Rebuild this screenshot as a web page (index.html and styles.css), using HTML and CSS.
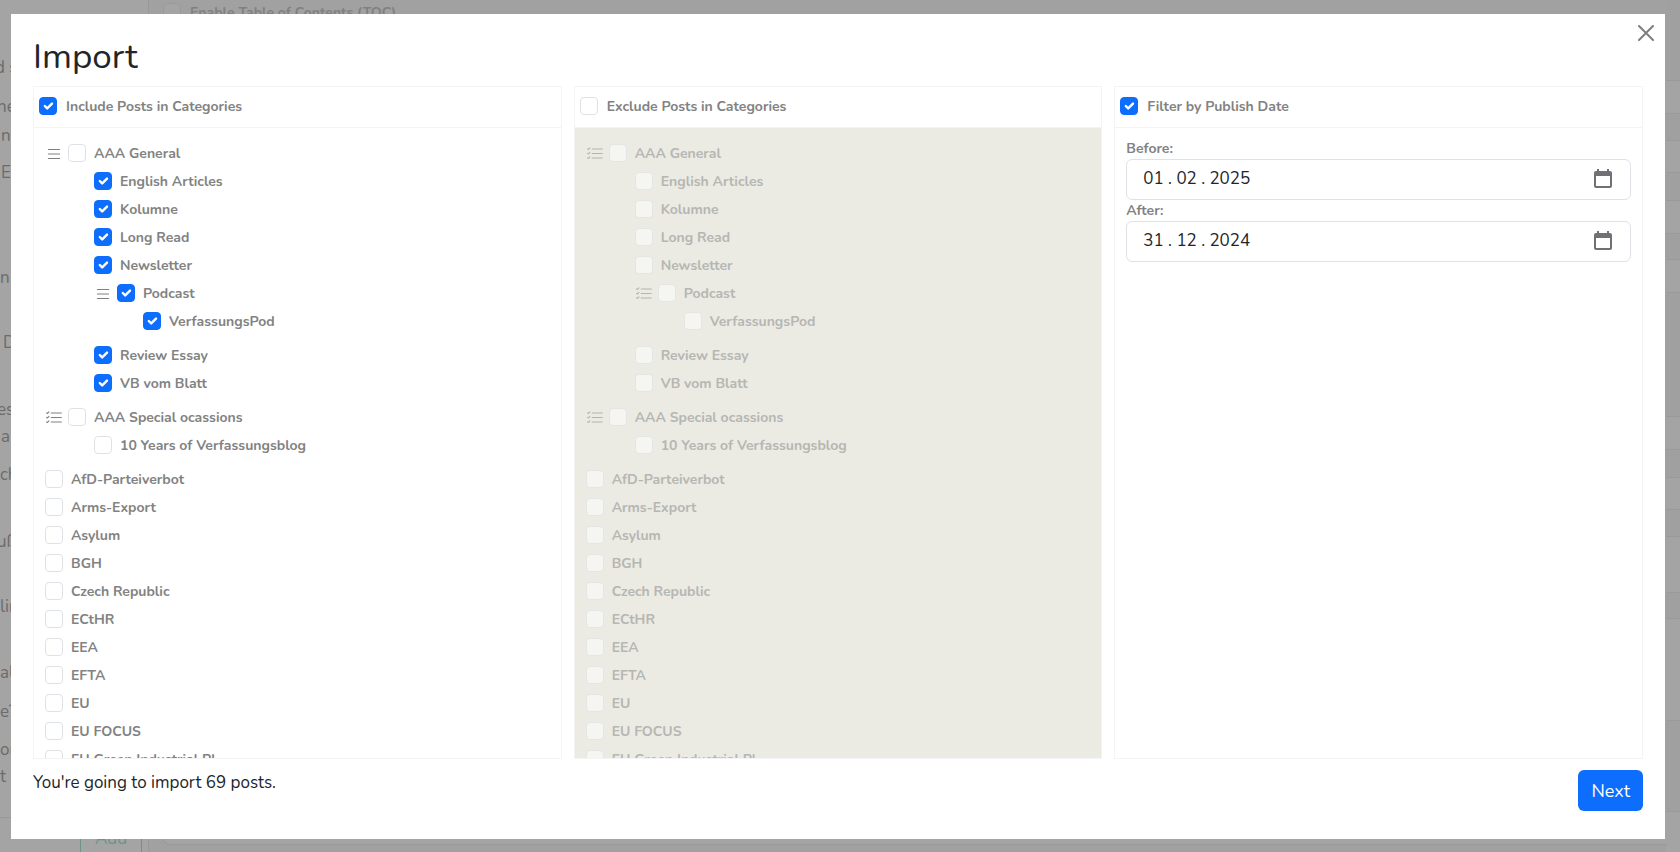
FILE: index.html
```
<!DOCTYPE html>
<html lang="en">
<head>
<meta charset="utf-8">
<title>Import</title>
<link rel="stylesheet" href="styles.css">
</head>
<body>
<svg width="0" height="0" class="sprite" aria-hidden="true">
  <symbol id="list" viewBox="0 0 16 16"><path fill-rule="evenodd" d="M2.500 12a.5.5 0 0 1 .5-.5h10a.5.5 0 0 1 0 1H3a.5.5 0 0 1-.5-.5m0-4a.5.5 0 0 1 .5-.5h10a.5.5 0 0 1 0 1H3a.5.5 0 0 1-.5-.5m0-4a.5.5 0 0 1 .5-.5h10a.5.5 0 0 1 0 1H3a.5.5 0 0 1-.5-.5"/></symbol>
  <symbol id="list-check" viewBox="0 0 16 16"><path fill-rule="evenodd" d="M5 11.500a.5.5 0 0 1 .5-.5h9a.5.5 0 0 1 0 1h-9a.5.5 0 0 1-.5-.5m0-4a.5.5 0 0 1 .5-.5h9a.5.5 0 0 1 0 1h-9a.5.5 0 0 1-.5-.5m0-4a.5.5 0 0 1 .5-.5h9a.5.5 0 0 1 0 1h-9a.5.5 0 0 1-.5-.5M3.854 2.146a.5.5 0 0 1 0 .708l-1.500 1.500a.5.5 0 0 1-.708 0l-.5-.5a.5.5 0 1 1 .708-.708L2 3.293l1.146-1.147a.5.5 0 0 1 .708 0m0 4a.5.5 0 0 1 0 .708l-1.500 1.500a.5.5 0 0 1-.708 0l-.5-.5a.5.5 0 1 1 .708-.708L2 7.293l1.146-1.147a.5.5 0 0 1 .708 0m0 4a.5.5 0 0 1 0 .708l-1.500 1.500a.5.5 0 0 1-.708 0l-.5-.5a.5.5 0 0 1 .708-.708l.146.147 1.146-1.147a.5.5 0 0 1 .708 0"/></symbol>
  <symbol id="calendar" viewBox="0 0 18 20"><path fill-rule="evenodd" d="M3 0h2v2h8V0h2v2h1a2 2 0 0 1 2 2v13a2 2 0 0 1-2 2H2a2 2 0 0 1-2-2V4a2 2 0 0 1 2-2h1zM2 7v10h14V7z"/></symbol>
</svg>

<div class="page">
  <div class="page-start">
    <span class="cut">d s</span><span class="cut-s">ne</span><span class="in">n</span><span class="in">E</span><span>n</span><span class="in2">D</span><span class="cut-s">es</span><span class="in">a</span><span>ch</span><span class="cut-s">uß</span><span>lin</span><span>al</span><span>e?</span><span>or</span><span>t</span><span class="rule"></span>
  </div>
  <div class="page-side"><button class="add" type="button">Add</button></div>
  <div class="page-main">
    <label class="check"><input type="checkbox"><span>Enable Table of Contents (TOC)</span></label>
    <div class="page-card"></div>
  </div>
  <div class="page-end"><i></i><i></i><i></i><i></i><i></i><i></i><i></i><i></i><i></i><i></i><i></i><i></i><i></i><i></i><i></i><i></i><i></i></div>
</div>

<div class="modal" role="dialog" aria-modal="true" aria-labelledby="title">
  <button class="close" type="button" aria-label="Close"><svg viewBox="0 0 16 16"><path d="M1 1l14 14M15 1L1 15"/></svg></button>
  <h1 id="title">Import</h1>
  <div class="panels">
    <section class="panel">
      <header><label class="check"><input type="checkbox" checked><span>Include Posts in Categories</span></label></header>
      <ul class="tree">
        <li><div class="row"><svg><use href="#list"/></svg><label class="check"><input type="checkbox"><span>AAA General</span></label></div>
          <ul>
            <li><label class="check"><input type="checkbox" checked><span>English Articles</span></label></li>
            <li><label class="check"><input type="checkbox" checked><span>Kolumne</span></label></li>
            <li><label class="check"><input type="checkbox" checked><span>Long Read</span></label></li>
            <li><label class="check"><input type="checkbox" checked><span>Newsletter</span></label></li>
            <li><div class="row"><svg><use href="#list"/></svg><label class="check"><input type="checkbox" checked><span>Podcast</span></label></div>
              <ul><li><label class="check"><input type="checkbox" checked><span>VerfassungsPod</span></label></li></ul></li>
            <li><label class="check"><input type="checkbox" checked><span>Review Essay</span></label></li>
            <li><label class="check"><input type="checkbox" checked><span>VB vom Blatt</span></label></li>
          </ul></li>
        <li><div class="row"><svg><use href="#list-check"/></svg><label class="check"><input type="checkbox"><span>AAA Special ocassions</span></label></div>
          <ul><li><label class="check"><input type="checkbox"><span>10 Years of Verfassungsblog</span></label></li></ul></li>
        <li><label class="check"><input type="checkbox"><span>AfD-Parteiverbot</span></label></li>
        <li><label class="check"><input type="checkbox"><span>Arms-Export</span></label></li>
        <li><label class="check"><input type="checkbox"><span>Asylum</span></label></li>
        <li><label class="check"><input type="checkbox"><span>BGH</span></label></li>
        <li><label class="check"><input type="checkbox"><span>Czech Republic</span></label></li>
        <li><label class="check"><input type="checkbox"><span>ECtHR</span></label></li>
        <li><label class="check"><input type="checkbox"><span>EEA</span></label></li>
        <li><label class="check"><input type="checkbox"><span>EFTA</span></label></li>
        <li><label class="check"><input type="checkbox"><span>EU</span></label></li>
        <li><label class="check"><input type="checkbox"><span>EU FOCUS</span></label></li>
        <li><label class="check"><input type="checkbox"><span>EU Green Industrial Pl</span></label></li>
      </ul>
    </section>

    <section class="panel">
      <header><label class="check"><input type="checkbox"><span>Exclude Posts in Categories</span></label></header>
      <ul class="tree off">
        <li><div class="row"><svg><use href="#list-check"/></svg><label class="check"><input type="checkbox" disabled><span>AAA General</span></label></div>
          <ul>
            <li><label class="check"><input type="checkbox" disabled><span>English Articles</span></label></li>
            <li><label class="check"><input type="checkbox" disabled><span>Kolumne</span></label></li>
            <li><label class="check"><input type="checkbox" disabled><span>Long Read</span></label></li>
            <li><label class="check"><input type="checkbox" disabled><span>Newsletter</span></label></li>
            <li><div class="row"><svg><use href="#list-check"/></svg><label class="check"><input type="checkbox" disabled><span>Podcast</span></label></div>
              <ul><li><label class="check"><input type="checkbox" disabled><span>VerfassungsPod</span></label></li></ul></li>
            <li><label class="check"><input type="checkbox" disabled><span>Review Essay</span></label></li>
            <li><label class="check"><input type="checkbox" disabled><span>VB vom Blatt</span></label></li>
          </ul></li>
        <li><div class="row"><svg><use href="#list-check"/></svg><label class="check"><input type="checkbox" disabled><span>AAA Special ocassions</span></label></div>
          <ul><li><label class="check"><input type="checkbox" disabled><span>10 Years of Verfassungsblog</span></label></li></ul></li>
        <li><label class="check"><input type="checkbox" disabled><span>AfD-Parteiverbot</span></label></li>
        <li><label class="check"><input type="checkbox" disabled><span>Arms-Export</span></label></li>
        <li><label class="check"><input type="checkbox" disabled><span>Asylum</span></label></li>
        <li><label class="check"><input type="checkbox" disabled><span>BGH</span></label></li>
        <li><label class="check"><input type="checkbox" disabled><span>Czech Republic</span></label></li>
        <li><label class="check"><input type="checkbox" disabled><span>ECtHR</span></label></li>
        <li><label class="check"><input type="checkbox" disabled><span>EEA</span></label></li>
        <li><label class="check"><input type="checkbox" disabled><span>EFTA</span></label></li>
        <li><label class="check"><input type="checkbox" disabled><span>EU</span></label></li>
        <li><label class="check"><input type="checkbox" disabled><span>EU FOCUS</span></label></li>
        <li><label class="check"><input type="checkbox" disabled><span>EU Green Industrial Pl</span></label></li>
      </ul>
    </section>

    <section class="panel">
      <header><label class="check"><input type="checkbox" checked><span>Filter by Publish Date</span></label></header>
      <div class="dates">
        <label for="before">Before:</label>
        <div class="date"><input id="before" type="text" value="01 . 02 . 2025"><svg><use href="#calendar"/></svg></div>
        <label for="after">After:</label>
        <div class="date"><input id="after" type="text" value="31 . 12 . 2024"><svg><use href="#calendar"/></svg></div>
      </div>
    </section>
  </div>
  <footer>
    <p>You're going to import 69 posts.</p>
    <button class="next" type="button">Next</button>
  </footer>
</div>
</body>
</html>
```
FILE: styles.css
```
* { box-sizing: border-box; }
body { margin: 0; font: 400 17px/26px Nunito, "Open Sans", sans-serif; color: #212529; background: #a2a2a2; }
ul, h1, p { margin: 0; padding: 0; list-style: none; }
button, input { font: inherit; }
.sprite { position: absolute; }

/* dimmed page behind the dialog */
.page { display: grid; grid-template-columns: 12px 136px 1fr 14px; height: 100vh; overflow: hidden; color: #6b6b6b; background: #a4a4a4; }
.page-start { display: grid; padding-top: 55px; white-space: nowrap;
  grid-template-rows: 39px 29px 37px 105px 65px 67px 27px 38px 67px 65px 66px 39px 38px 27px 53px 1px; }
.page-start .cut { margin-left: -5px; }
.page-start .cut-s { margin-left: -3px; }
.page-start .in { margin-left: 1px; }
.page-start .in2 { margin-left: 3px; }
.page-start .rule { background: #999; }
.page-side { display: flex; align-items: flex-end; justify-content: flex-end; padding-right: 6px; }
.add { width: 62px; height: 42px; margin-bottom: -8px; border: 1px solid #6b9584; border-radius: 6px; background: none; color: #6b9584; }
.page-main { display: flex; flex-direction: column; justify-content: space-between; border-left: 1px solid #999; padding: 0 0 7px 14px; background: #a1a1a1; }
.page-main .check { height: 25px; color: #808080; }
.page-main .check input { background: #a4a4a4; border-color: #9a9a9a; }
.page-card { height: 30px; border: 1px solid #999; border-width: 0 0 1px 1px; border-radius: 0 0 0 6px; background: #a4a4a4; }
.page-end { display: grid; grid-template-rows: 81px 33px 27px 32px 28px 33px 26px 33px 124px 33px 28px 32px 27px 56px 26px 102px 91px; }
.page-end i { border-bottom: 1px solid #9a9a9a; background: #a0a0a0; }
.page-end i:nth-child(even) { background: #a4a4a4; }

/* dialog */
.modal { position: fixed; inset: 14px 15px 13px 11px; display: flex; flex-direction: column; padding: 22px 22px 28px; background: #fff; }
.close { position: absolute; top: 11px; right: 11px; display: flex; padding: 0; border: 0; background: none; }
.close svg { width: 16px; height: 16px; fill: none; stroke: #7f7f7f; stroke-width: 2; stroke-linecap: round; }
h1 { font-size: 35px; font-weight: 400; line-height: 42px; margin-bottom: 8px; }
.panels { flex: 1; min-height: 0; display: grid; grid-template-columns: repeat(3, 1fr); gap: 12px; }
.panel { display: flex; flex-direction: column; min-height: 0; border: 1px solid #f4f4f4; color: #828282; }
.panel header { padding: 6px 5px; border-bottom: 1px solid #f4f4f4; }
.check { display: flex; align-items: center; gap: 9px; height: 28px; font-size: 14px; font-weight: 700; }
.check input { appearance: none; flex: none; width: 18px; height: 18px; margin: 0 0 2px; border: 1px solid #dee2e6; border-radius: 4px; background: #fff; }
.check input:checked { border-color: #0d6efd; background: #0d6efd url("data:image/svg+xml,%3Csvg xmlns='http://www.w3.org/2000/svg' viewBox='0 0 20 20'%3E%3Cpath fill='none' stroke='%23fff' stroke-linecap='round' stroke-linejoin='round' stroke-width='3' d='m6 10 3 3 6-6'/%3E%3C/svg%3E") center / contain no-repeat; }
.tree { flex: 1; min-height: 0; overflow: hidden; padding: 12px 11px 0; }
.tree ul { padding-left: 49px; margin-bottom: 6px; }
.tree .check { gap: 8px; }
.row { display: flex; align-items: center; gap: 5px; }
.row svg { width: 18px; height: 18px; fill: #808080; }
.off { background: #ebebe4; }
.off li > .check, .off .row { opacity: .5; }
.off .row .check { opacity: 1; }
.dates { display: flex; flex-direction: column; padding: 10px 11px; font-size: 14px; font-weight: 700; }
.dates label { line-height: 21px; }
.date { display: flex; align-items: center; height: 41px; border: 1px solid #dee2e6; border-radius: 6px; padding: 0 18px 2px 16px; }
.date input { flex: 1; min-width: 0; padding: 0; border: 0; outline: 0; background: none; color: #212529; font-size: 17px; font-weight: 400; }
.date svg { width: 18px; height: 20px; fill: #6f7174; }
footer { display: flex; justify-content: space-between; padding-top: 11px; }
.next { height: 41px; padding: 0 13px; border: 0; border-radius: 6px; background: #0d6efd; color: #fff; font-size: 18px; }
```
